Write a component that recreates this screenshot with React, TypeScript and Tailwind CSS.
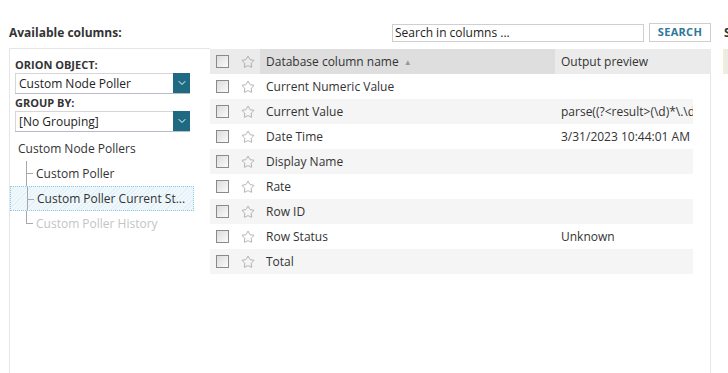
import { ChevronDown, Star } from "lucide-react";

type GridRow = {
  name: string;
  preview?: string;
};

const ROWS: GridRow[] = [
  { name: "Current Numeric Value" },
  { name: "Current Value", preview: "parse((?<result>(\\d)*\\.\\d+)" },
  { name: "Date Time", preview: "3/31/2023 10:44:01 AM" },
  { name: "Display Name" },
  { name: "Rate" },
  { name: "Row ID" },
  { name: "Row Status", preview: "Unknown" },
  { name: "Total" }
];

function Checkbox() {
  return (
    <span className="block h-[13px] w-[13px] border border-[#8a8a8a] bg-gradient-to-br from-[#dcdcdc] to-[#fbfbfb]" />
  );
}

function SelectBox({ value }: { value: string }) {
  return (
    <div className="flex h-[21px] w-[175px] border-b border-[#b9b9c9]">
      <div className="flex flex-1 items-center border-l border-t border-[#d6d6d6] bg-white pl-[3px] text-[12px] text-[#222]">
        {value}
      </div>
      <div className="flex w-[17px] items-center justify-center bg-[#1f6a83]">
        <ChevronDown className="h-3 w-3 text-white" strokeWidth={2} />
      </div>
    </div>
  );
}

function TreeItem({ label, last, selected, disabled }: { label: string; last?: boolean; selected?: boolean; disabled?: boolean }) {
  return (
    <div
      className={
        selected
          ? "relative flex h-[25px] w-[184px] items-center border border-dotted border-[#8fc9e3] bg-[repeating-linear-gradient(135deg,#f0f8fc_0px,#f0f8fc_2px,#e1f1f9_2px,#e1f1f9_3px)] pl-[26px]"
          : "relative flex h-[25px] w-[184px] items-center pl-[26px]"
      }
    >
      <span className={last ? "absolute left-[16px] top-0 h-[13px] w-px bg-[#a8a8a8]" : "absolute left-[16px] top-0 h-full w-px bg-[#a8a8a8]"} />
      <span className="absolute left-[16px] top-[12px] h-px w-[7px] bg-[#a8a8a8]" />
      <span className={disabled ? "truncate text-[12px] text-[#c4c4c4]" : "truncate text-[12px] text-[#333]"}>{label}</span>
    </div>
  );
}

export default function App() {
  return (
    <div className="flex h-[373px] w-[728px] overflow-hidden bg-white pl-[9px] font-['Open_Sans',sans-serif] text-[#333]">
      <div className="flex w-[702px] shrink-0 flex-col">
        <div className="mt-[23px] flex h-[19px] items-center">
          <h2 className="flex-1 pt-[1px] text-[12px] font-bold text-[#333]">Available columns:</h2>
          <div className="flex h-[18px] w-[252px] items-center border border-[#cfcfcf] pl-[2px] text-[12px] text-[#222]">
            Search in columns ...
          </div>
          <button type="button" className="ml-[5px] flex h-[19px] w-[62px] items-center justify-center border border-[#cfcfcf] text-[11px] font-bold tracking-[0.3px] text-[#2e779a]">
            SEARCH
          </button>
        </div>

        <div className="mt-[6px] flex flex-1">
          <div className="w-[201px] shrink-0 border-l border-t border-[#e6e6e6] pl-[5px] pt-[9px]">
            <div className="text-[11px] font-bold leading-[14px] text-[#333]">ORION OBJECT:</div>
            <div className="mt-[1px]">
              <SelectBox value="Custom Node Poller" />
            </div>
            <div className="mt-[2px] text-[11px] font-bold leading-[14px] text-[#333]">GROUP BY:</div>
            <div className="mt-[1px]">
              <SelectBox value="[No Grouping]" />
            </div>
            <div className="ml-[-5px] mt-[4px] flex flex-col">
              <div className="flex h-[25px] items-center pl-[8px] text-[12px] text-[#333]">Custom Node Pollers</div>
              <TreeItem label="Custom Poller" />
              <TreeItem label="Custom Poller Current St..." selected />
              <TreeItem label="Custom Poller History" last disabled />
            </div>
          </div>

          <div className="mt-[1px] flex w-[501px] shrink-0 flex-col">
            <div className="flex h-[25px] text-[12px]">
              <div className="flex w-[25px] items-center justify-center bg-[#ebebeb]">
                <Checkbox />
              </div>
              <div className="flex w-[25px] items-center justify-center bg-[#ebebeb]">
                <Star className="h-[14px] w-[14px] text-[#9a9a9a]" strokeWidth={1.3} />
              </div>
              <div className="flex w-[295px] items-center gap-[5px] bg-[#dedede] pl-[6px]">
                Database column name
                <span className="text-[8px] text-[#999]">▲</span>
              </div>
              <div className="flex flex-1 items-center bg-[#ebebeb] pl-[6px]">Output preview</div>
            </div>
            <div className="flex-1 border-r border-[#e6e6e6]">
              {ROWS.map((row, index) => (
                <div key={row.name} className={index % 2 === 1 ? "flex h-[25px] w-[483px] bg-[#f5f5f5] text-[12px]" : "flex h-[25px] w-[483px] bg-white text-[12px]"}>
                  <div className="flex w-[25px] items-center justify-center">
                    <Checkbox />
                  </div>
                  <div className="flex w-[25px] items-center justify-center">
                    <Star className="h-[14px] w-[14px] text-[#9a9a9a]" strokeWidth={1.3} />
                  </div>
                  <div className="flex w-[295px] items-center pl-[6px]">{row.name}</div>
                  <div className="flex flex-1 items-center overflow-hidden whitespace-nowrap pl-[6px]">{row.preview ?? ""}</div>
                </div>
              ))}
            </div>
          </div>
        </div>
      </div>

      <div className="ml-[13px] flex shrink-0 flex-col">
        <div className="mt-[23px] flex h-[19px] items-center">
          <h2 className="pt-[1px] text-[12px] font-bold text-[#333]">Selected columns:</h2>
        </div>
        <div className="ml-[-1px] mt-[7px] h-[25px] w-[200px] border-l-2 border-[#f3efcf] bg-[#ebebeb]" />
      </div>
    </div>
  );
}
